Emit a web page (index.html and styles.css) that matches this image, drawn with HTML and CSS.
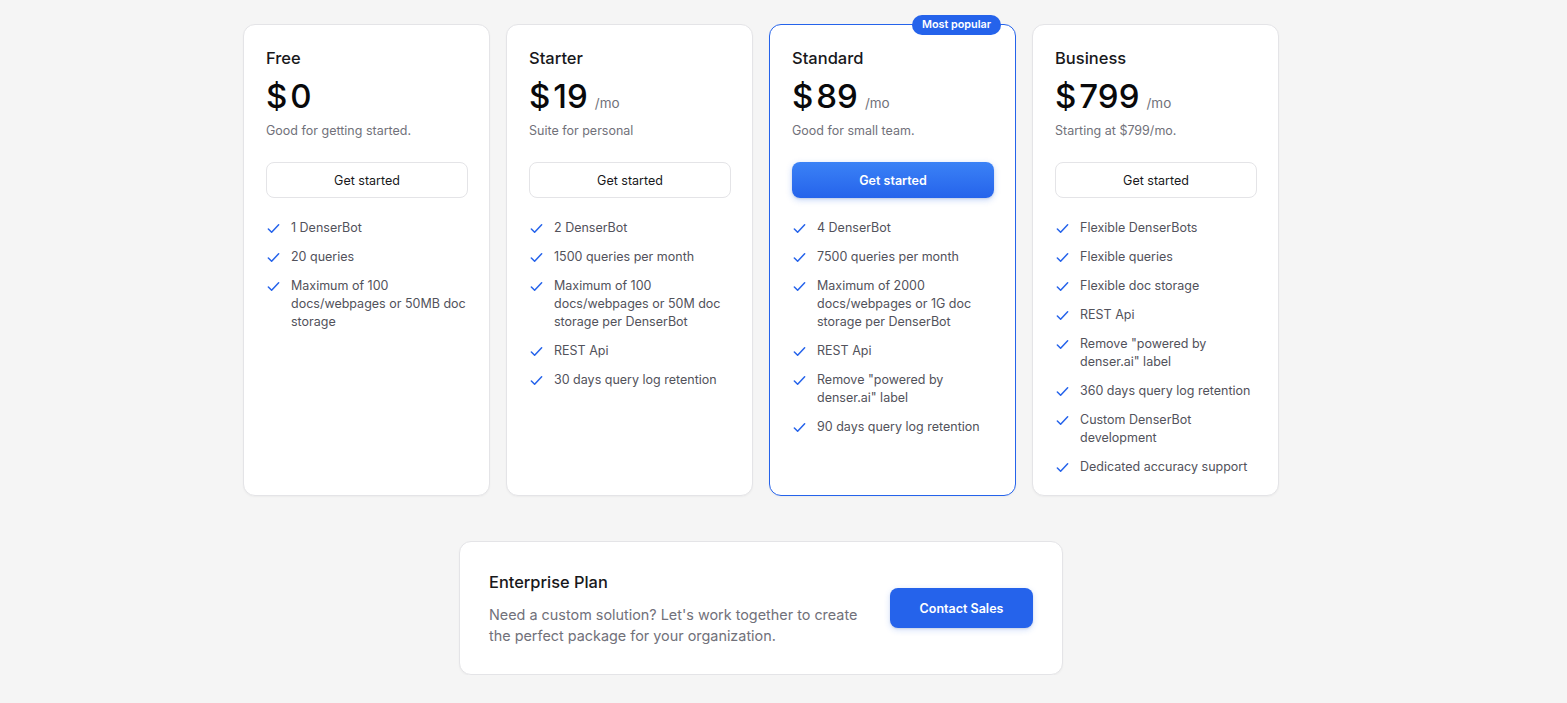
FILE: index.html
```html
<!DOCTYPE html>
<html lang="en">
<head>
<meta charset="utf-8">
<title>Pricing</title>
<link rel="stylesheet" href="styles.css">
</head>
<body>
<main class="page">
  <section class="plans">
    <article class="card">
      <h3 class="plan-name">Free</h3>
      <div class="price"><span class="cur">$</span><span class="amt">0</span></div>
      <p class="desc">Good for getting started.</p>
      <button class="btn">Get started</button>
      <ul class="features">
        <li><svg class="chk" viewBox="0 0 16 16"><path d="M2.5 8.5l3.5 3.5 7.5-8"/></svg><span>1 DenserBot</span></li>
        <li><svg class="chk" viewBox="0 0 16 16"><path d="M2.5 8.5l3.5 3.5 7.5-8"/></svg><span>20 queries</span></li>
        <li><svg class="chk" viewBox="0 0 16 16"><path d="M2.5 8.5l3.5 3.5 7.5-8"/></svg><span>Maximum of 100 docs/webpages or 50MB doc storage</span></li>
      </ul>
    </article>
    <article class="card">
      <h3 class="plan-name">Starter</h3>
      <div class="price"><span class="cur">$</span><span class="amt">19</span><span class="per">/mo</span></div>
      <p class="desc">Suite for personal</p>
      <button class="btn">Get started</button>
      <ul class="features">
        <li><svg class="chk" viewBox="0 0 16 16"><path d="M2.5 8.5l3.5 3.5 7.5-8"/></svg><span>2 DenserBot</span></li>
        <li><svg class="chk" viewBox="0 0 16 16"><path d="M2.5 8.5l3.5 3.5 7.5-8"/></svg><span>1500 queries per month</span></li>
        <li><svg class="chk" viewBox="0 0 16 16"><path d="M2.5 8.5l3.5 3.5 7.5-8"/></svg><span>Maximum of 100 docs/webpages or 50M doc storage per DenserBot</span></li>
        <li><svg class="chk" viewBox="0 0 16 16"><path d="M2.5 8.5l3.5 3.5 7.5-8"/></svg><span>REST Api</span></li>
        <li><svg class="chk" viewBox="0 0 16 16"><path d="M2.5 8.5l3.5 3.5 7.5-8"/></svg><span>30 days query log retention</span></li>
      </ul>
    </article>
    <article class="card popular">
      <span class="badge">Most popular</span>
      <h3 class="plan-name">Standard</h3>
      <div class="price"><span class="cur">$</span><span class="amt">89</span><span class="per">/mo</span></div>
      <p class="desc">Good for small team.</p>
      <button class="btn primary">Get started</button>
      <ul class="features">
        <li><svg class="chk" viewBox="0 0 16 16"><path d="M2.5 8.5l3.5 3.5 7.5-8"/></svg><span>4 DenserBot</span></li>
        <li><svg class="chk" viewBox="0 0 16 16"><path d="M2.5 8.5l3.5 3.5 7.5-8"/></svg><span>7500 queries per month</span></li>
        <li><svg class="chk" viewBox="0 0 16 16"><path d="M2.5 8.5l3.5 3.5 7.5-8"/></svg><span>Maximum of 2000 docs/webpages or 1G doc storage per DenserBot</span></li>
        <li><svg class="chk" viewBox="0 0 16 16"><path d="M2.5 8.5l3.5 3.5 7.5-8"/></svg><span>REST Api</span></li>
        <li><svg class="chk" viewBox="0 0 16 16"><path d="M2.5 8.5l3.5 3.5 7.5-8"/></svg><span>Remove "powered by denser.ai" label</span></li>
        <li><svg class="chk" viewBox="0 0 16 16"><path d="M2.5 8.5l3.5 3.5 7.5-8"/></svg><span>90 days query log retention</span></li>
      </ul>
    </article>
    <article class="card">
      <h3 class="plan-name">Business</h3>
      <div class="price"><span class="cur">$</span><span class="amt">799</span><span class="per">/mo</span></div>
      <p class="desc">Starting at $799/mo.</p>
      <button class="btn">Get started</button>
      <ul class="features">
        <li><svg class="chk" viewBox="0 0 16 16"><path d="M2.5 8.5l3.5 3.5 7.5-8"/></svg><span>Flexible DenserBots</span></li>
        <li><svg class="chk" viewBox="0 0 16 16"><path d="M2.5 8.5l3.5 3.5 7.5-8"/></svg><span>Flexible queries</span></li>
        <li><svg class="chk" viewBox="0 0 16 16"><path d="M2.5 8.5l3.5 3.5 7.5-8"/></svg><span>Flexible doc storage</span></li>
        <li><svg class="chk" viewBox="0 0 16 16"><path d="M2.5 8.5l3.5 3.5 7.5-8"/></svg><span>REST Api</span></li>
        <li><svg class="chk" viewBox="0 0 16 16"><path d="M2.5 8.5l3.5 3.5 7.5-8"/></svg><span>Remove "powered by denser.ai" label</span></li>
        <li><svg class="chk" viewBox="0 0 16 16"><path d="M2.5 8.5l3.5 3.5 7.5-8"/></svg><span>360 days query log retention</span></li>
        <li><svg class="chk" viewBox="0 0 16 16"><path d="M2.5 8.5l3.5 3.5 7.5-8"/></svg><span>Custom DenserBot development</span></li>
        <li><svg class="chk" viewBox="0 0 16 16"><path d="M2.5 8.5l3.5 3.5 7.5-8"/></svg><span>Dedicated accuracy support</span></li>
      </ul>
    </article>
  </section>

  <section class="enterprise">
    <div class="ent-text">
      <h3 class="ent-title">Enterprise Plan</h3>
      <p class="ent-desc">Need a custom solution? Let's work together to create the perfect package for your organization.</p>
    </div>
    <button class="btn-contact">Contact Sales</button>
  </section>
</main>
</body>
</html>
```

FILE: styles.css
```css
* { box-sizing: border-box; }

html, body {
  margin: 0;
  padding: 0;
  background: #f5f5f5;
  font-family: Inter, "Noto Sans", sans-serif;
  color: #18181b;
}

.page {
  width: 1522px;
  padding-top: 24px;
  display: flex;
  flex-direction: column;
  align-items: center;
  gap: 45px;
}

.plans {
  display: grid;
  grid-template-columns: repeat(4, 247px);
  gap: 16px;
  align-items: stretch;
}

.card {
  position: relative;
  background: #fff;
  border: 1px solid #e4e4e7;
  border-radius: 12px;
  padding: 21px 21px 20px 22px;
  height: 472px;
  box-shadow: 0 1px 2px rgba(0, 0, 0, 0.04);
  display: flex;
  flex-direction: column;
}

.card.popular {
  border-color: #2563eb;
}

.badge {
  position: absolute;
  top: -10px;
  right: 14px;
  height: 20px;
  padding: 0 10px;
  border-radius: 10px;
  background: #2563eb;
  color: #fff;
  font-size: 10.8px;
  font-weight: 600;
  line-height: 20px;
}

.plan-name {
  margin: 0;
  font-size: 16.5px;
  font-weight: 500;
  line-height: 24px;
  color: #18181b;
}

.price {
  margin-top: 6px;
  height: 40px;
  display: flex;
  align-items: baseline;
  font-size: 33px;
  font-weight: 500;
  line-height: 40px;
  color: #09090b;
}

.price .cur {
  margin-right: 3px;
}

.price .per {
  font-size: 13.5px;
  font-weight: 400;
  color: #71717a;
  margin-left: 7px;
}

.desc {
  margin: 5px 0 0;
  font-size: 12.5px;
  line-height: 20px;
  color: #71717a;
}

.btn {
  margin-top: 21px;
  height: 36px;
  width: 100%;
  flex: none;
  border: 1px solid #e4e4e7;
  border-radius: 8px;
  background: #fff;
  font-family: inherit;
  font-size: 12.5px;
  font-weight: 400;
  color: #18181b;
  cursor: pointer;
}

.btn.primary {
  border: none;
  background: linear-gradient(180deg, #3b82f6 0%, #2563eb 100%);
  color: #fff;
  font-weight: 600;
  box-shadow: 0 2px 6px rgba(37, 99, 235, 0.25), 0 1px 2px rgba(0, 0, 0, 0.1);
}

.features {
  list-style: none;
  margin: 21px 0 0;
  padding: 0;
  display: flex;
  flex-direction: column;
  gap: 11px;
}

.features li {
  display: flex;
  align-items: flex-start;
  gap: 10px;
  font-size: 12.5px;
  line-height: 18px;
  color: #52525b;
}

.chk {
  flex: none;
  width: 15px;
  height: 15px;
  margin-top: 2px;
  fill: none;
  stroke: #2563eb;
  stroke-width: 1.6;
  stroke-linecap: round;
  stroke-linejoin: round;
}

.enterprise {
  width: 604px;
  height: 134px;
  background: #fff;
  border: 1px solid #e4e4e7;
  border-radius: 12px;
  box-shadow: 0 1px 2px rgba(0, 0, 0, 0.04);
  padding: 0 29px;
  display: flex;
  align-items: center;
  justify-content: space-between;
}

.ent-text {
  width: 380px;
}

.ent-title {
  margin: 0;
  font-size: 16.4px;
  font-weight: 500;
  line-height: 24px;
  color: #18181b;
}

.ent-desc {
  margin: 10px 0 0;
  font-size: 14.4px;
  line-height: 21px;
  color: #71717a;
}

.btn-contact {
  width: 143px;
  height: 40px;
  border: none;
  border-radius: 8px;
  background: #2563eb;
  color: #fff;
  font-family: inherit;
  font-size: 12.5px;
  font-weight: 600;
  box-shadow: 0 2px 6px rgba(37, 99, 235, 0.2), 0 1px 2px rgba(0, 0, 0, 0.1);
  cursor: pointer;
}
```
